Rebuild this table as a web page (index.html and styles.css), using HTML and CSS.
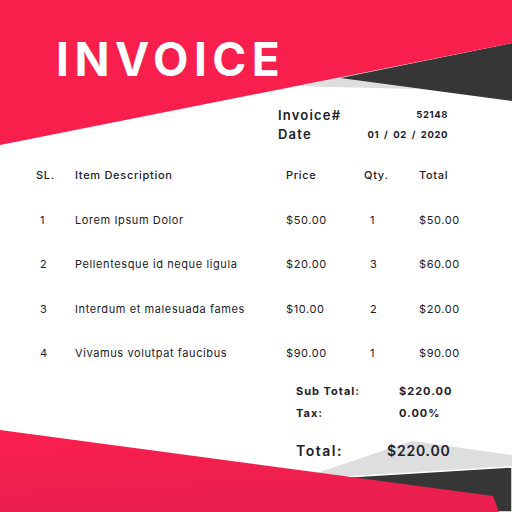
FILE: index.html
```html
<!DOCTYPE html>
<html>
<head>
<meta charset="utf-8">
<link rel="stylesheet" href="styles.css">
</head>
<body>
<div class="page">
  <svg class="bg" width="512" height="512" viewBox="0 0 512 512" aria-hidden="true">
    <defs>
      <linearGradient id="redGrad" x1="0" y1="0" x2="0.3" y2="1">
        <stop offset="0" stop-color="#fb1f4e"/>
        <stop offset="1" stop-color="#e91f4f"/>
      </linearGradient>
    </defs>
    <polygon class="gray" points="300,86 340,78 420,89 330,87"/>
    <polygon class="dark" points="340,78 512,43 512,101"/>
    <polygon class="red" points="0,0 512,0 512,43 0,145"/>
    <polygon class="gray" points="290,482 412,441 512,455 512,512 290,512"/>
    <polygon class="dark-b" points="330,478 512,467 512,512 330,512"/>
    <polygon fill="url(#redGrad)" points="0,430 493,496 499,512 0,512"/>
  </svg>

  <h1 class="title">INVOICE</h1>

  <div class="meta">
    <span class="meta-label">Invoice#</span><span class="meta-value">52148</span>
    <span class="meta-label">Date</span><span class="meta-value">01 / 02 / 2020</span>
  </div>

  <div class="items">
    <div class="row head">
      <span class="c-sl">SL.</span><span>Item Description</span><span>Price</span><span>Qty.</span><span>Total</span>
    </div>
    <div class="row">
      <span class="c-sl num">1</span><span>Lorem Ipsum Dolor</span><span>$50.00</span><span class="num">1</span><span>$50.00</span>
    </div>
    <div class="row">
      <span class="c-sl num">2</span><span>Pellentesque id neque ligula</span><span>$20.00</span><span class="num">3</span><span>$60.00</span>
    </div>
    <div class="row">
      <span class="c-sl num">3</span><span>Interdum et malesuada fames</span><span>$10.00</span><span class="num">2</span><span>$20.00</span>
    </div>
    <div class="row">
      <span class="c-sl num">4</span><span>Vivamus volutpat faucibus</span><span>$90.00</span><span class="num">1</span><span>$90.00</span>
    </div>
  </div>

  <div class="totals">
    <span>Sub Total:</span><span>$220.00</span>
    <span>Tax:</span><span>0.00%</span>
  </div>

  <div class="grand">
    <span class="grand-label">Total:</span><span class="grand-value">$220.00</span>
  </div>
</div>
</body>
</html>
```

FILE: styles.css
```css
* { box-sizing: border-box; }
html, body { margin: 0; padding: 0; background: #fff; }
body { width: 512px; height: 512px; overflow: hidden; font-family: Inter, "DejaVu Sans", sans-serif; color: #20202a; }

.page { position: relative; width: 512px; height: 512px; overflow: hidden; }
.bg { position: absolute; left: 0; top: 0; z-index: 0; }
.red { fill: #f81f4d; }
.dark { fill: #363636; }
.dark-b { fill: #363636; stroke: #fff; stroke-width: 1.5; }
.gray { fill: #dedede; }

.title, .meta, .items, .totals, .grand { position: relative; z-index: 1; }

.title {
  margin: 0;
  padding: 31px 0 0 56px;
  font-size: 46px;
  line-height: 56px;
  height: 87px;
  font-weight: 700;
  letter-spacing: 5.5px;
  color: #fff;
}

.meta {
  margin: 18px 0 0 278px;
  width: 170px;
  display: grid;
  grid-template-columns: auto 1fr;
  grid-auto-rows: 19.5px;
  align-items: center;
}
.meta-label { font-size: 13px; font-weight: 600; letter-spacing: 1.2px; }
.meta-value { font-size: 9.5px; font-weight: 700; letter-spacing: 0.6px; word-spacing: 2px; text-align: right; }

.items { margin: 7.7px 0 0 36px; }
.row {
  display: grid;
  grid-template-columns: 39px 211px 78px 55px 60px;
  height: 44.5px;
  align-items: center;
  font-size: 11px;
  letter-spacing: 0.6px;
}
.row.head { height: 46px; font-weight: 500; letter-spacing: 0.7px; }
.c-sl.num { padding-left: 4px; }
.num { padding-left: 6px; }

.totals {
  margin: 4.5px 0 0 296px;
  display: grid;
  grid-template-columns: 103px auto;
  grid-auto-rows: 21.7px;
  align-items: center;
  font-size: 11px;
  font-weight: 700;
  letter-spacing: 1px;
}

.grand {
  margin: 13.5px 0 0 296px;
  display: grid;
  grid-template-columns: 91px auto;
  height: 26px;
  align-items: center;
  font-size: 14px;
  font-weight: 600;
}
.grand-label { letter-spacing: 1.5px; }
.grand-value { letter-spacing: 0.8px; }
```
